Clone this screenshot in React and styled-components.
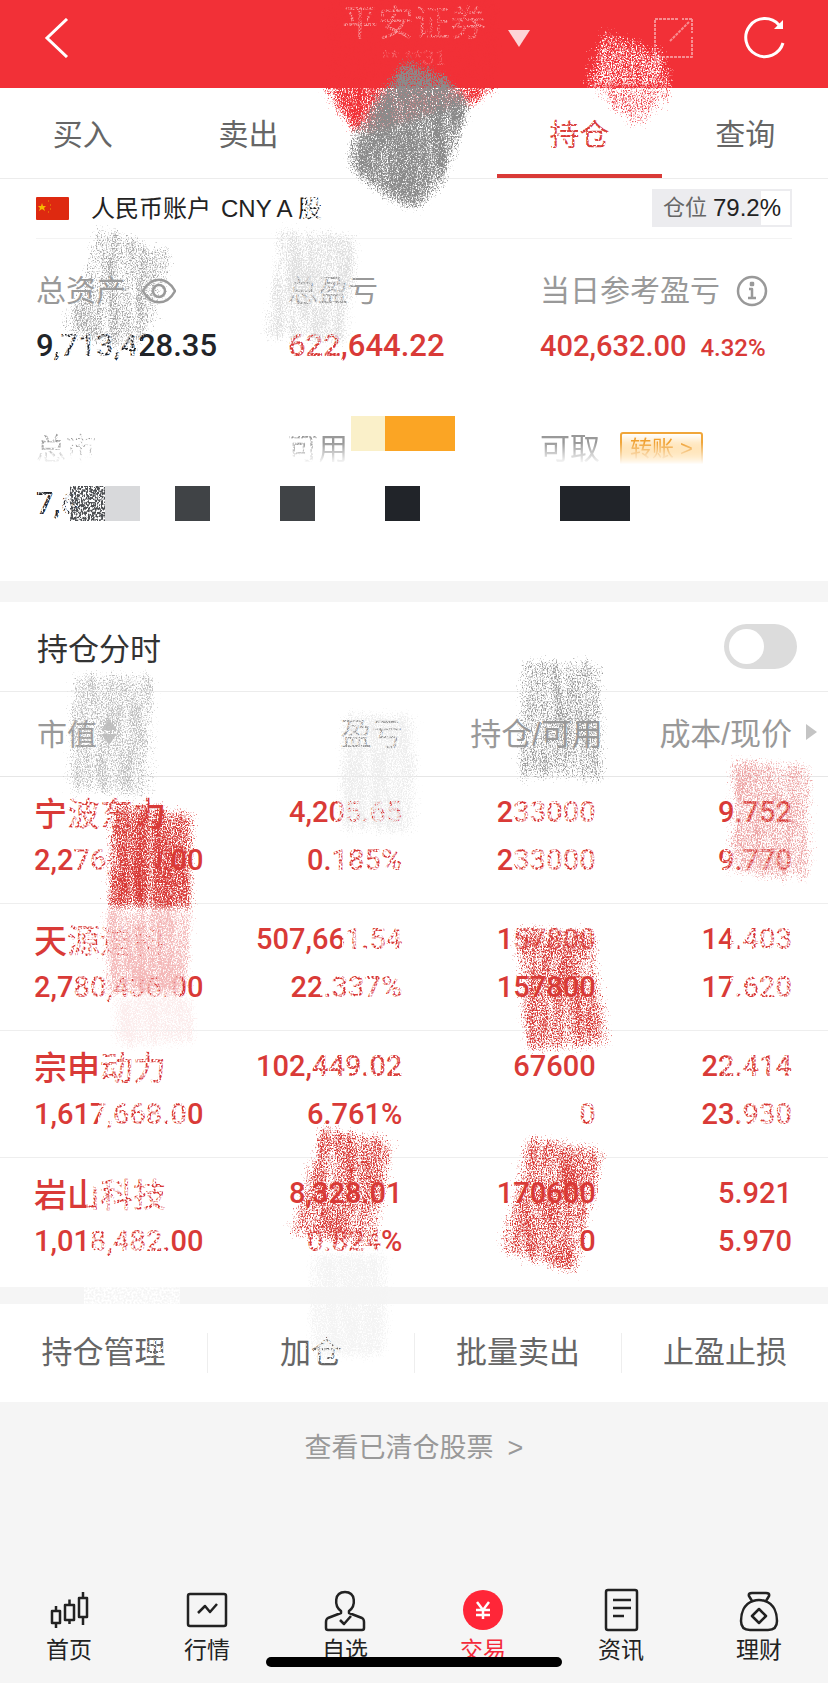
import React from 'react';
import styled, { createGlobalStyle } from 'styled-components';

const Global = createGlobalStyle`
  * { box-sizing: border-box; }
  body {
    margin: 0;
    background: #f5f5f5;
    font-family: "Liberation Sans", "Noto Sans CJK SC", sans-serif;
    color: #333;
  }
  button { border: 0; padding: 0; background: none; font: inherit; color: inherit; cursor: pointer; }
  a { color: inherit; text-decoration: none; }
  svg { display: block; }
`;

const Page = styled.div`
  position: relative;
  overflow: hidden;
`;

const Header = styled.header`
  display: grid;
  grid-template-columns: 1fr auto 1fr;
  align-items: center;
  height: 88px;
  padding: 0 42px 12px;
  background: #f23037;
  color: #fff;
`;
const Broker = styled.button`
  display: flex;
  align-items: center;
  gap: 20px;
  height: 76px;
  padding-left: 42px;
`;
const BrokerText = styled.span`
  display: flex;
  flex-direction: column;
  width: 148px;
  font-size: 36px;
  line-height: 40px;
  opacity: 0.5;
`;
const BrokerNumber = styled.span`
  font-size: 22px;
  line-height: 28px;
  text-align: center;
  opacity: 0.6;
`;
const HeaderTools = styled.div`
  display: flex;
  justify-content: flex-end;
  gap: 49px;
`;

const Tabs = styled.nav`
  display: grid;
  grid-template-columns: repeat(5, 1fr);
  height: 91px;
  background: #fff;
  border-bottom: 1px solid #ececec;
`;
const Tab = styled.a`
  display: flex;
  align-items: center;
  justify-content: center;
  padding-top: 2px;
  font-size: 30px;
  border-bottom: 4px solid ${(p) => (p.$active ? '#d93a37' : 'transparent')};
  color: ${(p) => (p.$active ? '#d93a37' : '#666')};
`;

const Summary = styled.section`
  background: #fff;
  padding: 0 36px 56px;
`;
const Account = styled.div`
  display: flex;
  align-items: center;
  gap: 22px;
  height: 60px;
  border-bottom: 1px solid #f3f3f3;
`;
const AccountName = styled.span`
  display: flex;
  gap: 10px;
  flex: 1;
  font-size: 24px;
  line-height: 36px;
  color: #222;
`;
const Position = styled.span`
  display: flex;
  align-items: center;
  justify-content: center;
  gap: 6px;
  width: 140px;
  height: 38px;
  margin-bottom: 2px;
  border: 2px solid #ececef;
  background: linear-gradient(90deg, #ececef 79%, #fff 79%);
  font-size: 24px;
  line-height: 32px;
  color: #222;
`;
const PositionLabel = styled.span`
  font-size: 22px;
  color: #666;
`;
const Figures = styled.dl`
  display: grid;
  grid-template-columns: repeat(3, 1fr);
  row-gap: 60px;
  margin: 0;
  padding-top: 30px;
`;
const FigureLabel = styled.dt`
  display: flex;
  align-items: center;
  gap: 16px;
  height: 44px;
  margin-bottom: 10px;
  font-size: 30px;
  line-height: 44px;
  white-space: nowrap;
  color: #999;
  ${(p) => p.$faded && 'mask-image: linear-gradient(#000 35%, transparent 85%);'}
`;
const FigureValue = styled.dd`
  display: flex;
  align-items: baseline;
  gap: 14px;
  height: 44px;
  margin: 0;
  font-family: Roboto, sans-serif;
  font-weight: 500;
  font-size: ${(p) => (p.$compact ? 29 : 31)}px;
  line-height: 46px;
  white-space: nowrap;
  color: ${(p) => (p.$up ? '#d93a37' : '#212429')};
`;
const Percent = styled.span`
  font-size: 24px;
`;
const Transfer = styled.button`
  height: 34px;
  margin-left: 4px;
  padding: 0 8px;
  border: 2px solid #f0a63a;
  border-radius: 3px;
  background: linear-gradient(#fff, #ffb840);
  font-size: 22px;
  line-height: 30px;
  color: #f0a030;
`;

const Holdings = styled.section`
  margin-top: 21px;
  background: #fff;
`;
const ChartToggle = styled.label`
  display: flex;
  align-items: center;
  justify-content: space-between;
  height: 90px;
  padding: 0 31px 0 37px;
  border-bottom: 1px solid #ececec;
  font-size: 31px;
  color: #333;
`;
const Switch = styled.input`
  appearance: none;
  width: 73px;
  height: 45px;
  margin: 0;
  padding: 5px;
  border-radius: 23px;
  background: #dcdcdc;
  &::before {
    content: '';
    display: block;
    width: 35px;
    height: 35px;
    border-radius: 50%;
    background: #fff;
  }
  &:checked { background: #d93a37; }
  &:checked::before { margin-left: auto; }
`;
const Table = styled.table`
  width: 100%;
  table-layout: fixed;
  border-collapse: collapse;
`;
const HeadCell = styled.th`
  height: 84px;
  width: ${(p) => p.$width};
  padding: 0 ${(p) => (p.$edge ? 11 : 0)}px 4px ${(p) => (p.$first ? 37 : 0)}px;
  border-bottom: 1px solid #e6e6e6;
  font-size: ${(p) => (p.$first ? 30 : 31)}px;
  font-weight: 400;
  color: #999;
`;
const HeadLabel = styled.span`
  display: flex;
  align-items: center;
  justify-content: ${(p) => (p.$first ? 'flex-start' : 'flex-end')};
  gap: ${(p) => (p.$first ? 4 : 14)}px;
  white-space: nowrap;
`;
const Cell = styled.td`
  padding: 11px ${(p) => p.$right || 0}px 19px ${(p) => (p.$first ? 34 : 0)}px;
  border-bottom: 1px solid #eee;
  text-align: ${(p) => (p.$first ? 'left' : 'right')};
  white-space: nowrap;
  color: #d93a37;
  tr:last-child & { border-bottom: 0; padding-bottom: 22px; }
`;
const Line = styled.span`
  display: block;
  height: 48px;
  font-family: Roboto, "Noto Sans CJK SC", sans-serif;
  font-weight: 500;
  font-size: ${(p) => (p.$name ? 33 : 29)}px;
  line-height: ${(p) => (p.$name ? 54 : 48)}px;
`;

const Actions = styled.section`
  display: grid;
  grid-template-columns: repeat(4, 1fr);
  align-items: center;
  height: 98px;
  margin-top: 17px;
  background: #fff;
`;
const Action = styled.button`
  height: 40px;
  font-size: 31px;
  line-height: 40px;
  color: #666;
  & + & { border-left: 1px solid #eee; }
`;
const Closed = styled.div`
  display: flex;
  justify-content: center;
  height: 173px;
  padding-top: 26px;
`;
const ClosedLink = styled.a`
  display: flex;
  gap: 14px;
  font-size: 27px;
  line-height: 40px;
  height: 40px;
  color: #999;
`;
const BottomNav = styled.nav`
  position: relative;
  display: grid;
  grid-template-columns: repeat(6, 1fr);
  height: 108px;
  padding-top: 12px;
`;
const NavItem = styled.a`
  display: flex;
  flex-direction: column;
  align-items: center;
  font-size: 23px;
  line-height: 34px;
  color: ${(p) => (p.$active ? '#f32b3a' : '#222')};
`;
const HomeBar = styled.span`
  position: absolute;
  left: 50%;
  bottom: 16px;
  width: 296px;
  height: 10px;
  border-radius: 5px;
  background: #000;
  transform: translateX(-50%);
`;
const Overlay = styled.svg`
  position: absolute;
  top: 0;
  left: 0;
  pointer-events: none;
`;

const Icon = ({ size = 46, stroke = 2, ...rest }) => (
  <svg width={size} height={size} viewBox={`0 0 ${size} ${size}`} fill="none" stroke="currentColor" strokeWidth={stroke} strokeLinejoin="round" aria-hidden="true" {...rest} />
);

const navItems = [
  { label: '首页', icon: <Icon stroke={2.5}><path d="M6 24h8v12H6zM10 19v5M10 36v5M19 18h9v15h-9zM23.500 12.500V18M23.500 33v4M33 11h8v19h-8zM37 5v6M37 30v8" /></Icon> },
  { label: '行情', icon: <Icon stroke={2.5}><rect x="4" y="7" width="38" height="32" rx="2" /><path d="m14 26 7-7 5 6 7-8" /></Icon> },
  { label: '自选', icon: <Icon stroke={2.5}><path d="M19 24c-7-5-7-19 4-19s11 14 4 19v2l13 5q2 1 2 4v6q0 2-2 2H6q-2 0-2-2v-6q0-3 2-4l13-5zM18 33l4 4 7-8" /></Icon> },
  { label: '交易', active: true, icon: <Icon><circle cx="23" cy="23" r="20" fill="#ff2638" stroke="none" /><path d="m17 15 6 8 6-8M16 23h14M16 28h14M23 23v9" stroke="#fff" strokeWidth="2.500" strokeLinejoin="miter" /></Icon> },
  { label: '资讯', icon: <Icon stroke={2.5}><rect x="8" y="3" width="31" height="40" rx="2" /><path d="M15 13h18M15 21h18M15 29h11" /></Icon> },
  { label: '理财', icon: <Icon stroke={2.5}><path d="m16 14-3-5q-1-3 3-3h14q4 0 3 3l-3 5M17 14C8 17 5 26 5 34q0 9 9 9h18q9 0 9-9c0-8-3-17-12-20q-6-2-12 0zM23 22l7 7-7 7-7-7z" /></Icon> },
];

const rows = [
  ['宁波东力', '2,276,410.00', '4,205.65', '0.185%', '233000', '233000', '9.752', '9.770'],
  ['天源迪科', '2,780,436.00', '507,661.54', '22.337%', '157800', '157800', '14.403', '17.620'],
  ['宗申动力', '1,617,668.00', '102,449.02', '6.761%', '67600', '0', '22.414', '23.930'],
  ['岩山科技', '1,018,482.00', '8,328.01', '0.824%', '170600', '0', '5.921', '5.970'],
];

/* Crayon strokes: polygon, colour, coverage. */
const strokes = [
  ['314,76 512,76 484,105 440,122 362,146 332,114', '#f23037', 0.68],
  ['406,52 444,70 476,96 468,127 444,192 414,216 380,200 344,168 348,136 370,96', '#8a8a8a', 0.68],
  ['602,22 674,50 682,98 576,98 586,53', '#ffffff', 0.55],
  ['584,80 682,80 670,106 638,138 602,108', '#f0434a', 0.54],
  ['92,218 178,246 162,329 126,358 52,334 76,280', '#a4a4a4', 0.53],
  ['274,222 364,228 354,350 258,345', '#dfdfdf', 0.58],
  ['68,668 160,668 158,804 62,796', '#bcbcbc', 0.55],
  ['517,652 609,658 609,788 511,782', '#999999', 0.54],
  ['336,708 422,708 420,840 334,836', '#ececec', 0.6],
  ['727,752 816,760 816,888 721,878', '#eda4a4', 0.57],
  ['106,796 198,808 196,918 102,916', '#d93a37', 0.64],
  ['100,902 197,902 193,1004 98,1000', '#f3b8b8', 0.62],
  ['108,988 198,988 200,1050 110,1052', '#fbebeb', 0.62],
  ['507,922 598,926 616,1050 523,1058', '#d93a37', 0.58],
  ['317,1120 400,1136 380,1254 282,1240', '#d93a37', 0.58],
  ['523,1130 609,1144 582,1280 494,1256', '#d93a37', 0.59],
  ['306,1248 394,1248 390,1362 306,1362', '#f5f5f5', 0.65],
];

/* Rubbed-out patches: x, y, width, height, coverage. */
const rubs = [
  [55, 328, 85, 36, 0.53], [288, 328, 55, 34, 0.47], [290, 270, 54, 40, 0.42],
  [551, 110, 62, 46, 0.44], [303, 192, 26, 32, 0.54], [36, 430, 34, 44, 0.5],
  [70, 430, 30, 44, 0.6],
  [290, 430, 30, 44, 0.5], [38, 484, 22, 40, 0.46], [60, 484, 20, 40, 0.6],
  [338, 716, 66, 42, 0.4], [68, 790, 80, 44, 0.53], [72, 840, 36, 40, 0.53],
  [108, 840, 50, 40, 0.75],
  [334, 792, 74, 42, 0.52], [334, 840, 74, 40, 0.52], [514, 792, 86, 88, 0.53], [722, 840, 74, 40, 0.46],
  [68, 918, 36, 44, 0.54], [104, 918, 68, 44, 0.6], [72, 966, 108, 40, 0.53], [342, 920, 64, 40, 0.54], [320, 968, 84, 40, 0.52],
  [514, 920, 86, 38, 0.5], [730, 920, 66, 88, 0.53],
  [102, 1046, 68, 42, 0.52], [98, 1094, 90, 40, 0.54], [314, 1048, 88, 38, 0.46],
  [578, 1096, 22, 38, 0.52], [722, 1048, 74, 38, 0.49], [738, 1096, 58, 38, 0.53],
  [86, 1172, 84, 44, 0.54], [88, 1222, 78, 40, 0.54], [306, 1222, 74, 40, 0.52],
  [146, 1340, 18, 18, 0.44], [318, 1338, 22, 24, 0.44], [84, 1286, 96, 20, 0.52],
];

const mosaic = [
  [351, 416, 34, 35, '#faf0c9'], [385, 416, 70, 35, '#fba524'],
  [105, 486, 35, 35, '#d8d9db'], [175, 486, 35, 35, '#404346'], [280, 486, 35, 35, '#404346'],
  [385, 486, 35, 35, '#212429'], [560, 486, 70, 35, '#212429'],
];

const Scribbles = () => (
  <Overlay width="828" height="1683" viewBox="0 0 828 1683" aria-hidden="true">
    <defs>
      <filter id="crayon" x="-20%" y="-20%" width="140%" height="140%" colorInterpolationFilters="sRGB">
        <feTurbulence type="fractalNoise" baseFrequency="0.8 0.6" numOctaves="3" seed="4" result="grain" />
        <feTurbulence type="fractalNoise" baseFrequency="0.11 0.02" numOctaves="3" seed="9" result="streak" />
        <feComposite in="grain" in2="streak" operator="arithmetic" k2="0.8" k3="0.25" k4="-0.03" result="noise" />
        <feGaussianBlur in="SourceAlpha" stdDeviation="8" result="soft" />
        <feComposite in="noise" in2="soft" operator="arithmetic" k2="1" k3="1" k4="-0.8" result="sum" />
        <feColorMatrix in="sum" type="matrix" values="0 0 0 0 0  0 0 0 0 0  0 0 0 0 0  0 0 0 5 -0.9" result="cover" />
        <feMorphology in="SourceGraphic" operator="dilate" radius="10" result="wide" />
        <feColorMatrix in="wide" type="matrix" values="1 0 0 0 0  0 1 0 0 0  0 0 1 0 0  0 0 0 8 0" result="paint" />
        <feComposite in="paint" in2="cover" operator="in" />
      </filter>
      <filter id="rub" x="0%" y="0%" width="100%" height="100%" colorInterpolationFilters="sRGB">
        <feTurbulence type="fractalNoise" baseFrequency="0.5" numOctaves="2" seed="3" result="grain" />
        <feComposite in="grain" in2="SourceAlpha" operator="arithmetic" k2="1" k3="1" k4="-0.8" result="sum" />
        <feColorMatrix in="sum" type="matrix" values="0 0 0 0 1  0 0 0 0 1  0 0 0 0 1  0 0 0 5 -0.6" />
      </filter>
      <filter id="rub-dark" x="0%" y="0%" width="100%" height="100%" colorInterpolationFilters="sRGB">
        <feTurbulence type="fractalNoise" baseFrequency="0.6 0.4" numOctaves="2" seed="7" />
        <feColorMatrix type="matrix" values="0 0 0 0 0.3  0 0 0 0 0.31  0 0 0 0 0.32  0 0 0 6 -2.4" />
      </filter>
    </defs>
    <rect x="324" y="-10" width="178" height="94" fill="#f23037" fillOpacity="0.62" filter="url(#crayon)" />
    {rubs.map(([x, y, w, h, o]) => (
      <rect key={`${x}-${y}`} x={x} y={y} width={w} height={h} fill="#fff" fillOpacity={o} filter="url(#rub)" />
    ))}
    {strokes.map(([points, color, o]) => (
      <polygon key={points} points={points} fill={color} fillOpacity={o} filter="url(#crayon)" />
    ))}
    {mosaic.map(([x, y, w, h, c]) => (
      <rect key={`${x}-${y}`} x={x} y={y} width={w} height={h} fill={c} />
    ))}
    <rect x="70" y="486" width="35" height="35" filter="url(#rub-dark)" />
  </Overlay>
);

export default function App() {
  return (
    <Page>
      <Global />
      <Header>
        <button aria-label="返回"><svg width="28" height="40" fill="none" stroke="currentColor" strokeWidth="3"><path d="M25 1 5 20l20 19" /></svg></button>
        <Broker>
          <BrokerText>平安证券<BrokerNumber>** **31</BrokerNumber></BrokerText>
          <svg width="22" height="18" fill="#fff" fillOpacity="0.800"><path d="M0 1h22L11 18z" /></svg>
        </Broker>
        <HeaderTools>
          <button aria-label="编辑"><Icon size={42} opacity="0.450"><path d="M25 2H2v38h37V20M39 2v14M39 2H29M17 24 36 5" strokeDasharray="3 1" /></Icon></button>
          <button aria-label="刷新"><Icon size={42} stroke={3}><path d="M39 26A19 19 0 1 1 35 8" /><path d="M39 3v9h-9z" fill="currentColor" stroke="none" /></Icon></button>
        </HeaderTools>
      </Header>
      <Tabs>
        <Tab href="#buy">买入</Tab>
        <Tab href="#sell">卖出</Tab>
        <Tab href="#cancel" aria-label="撤单" />
        <Tab href="#holdings" $active>持仓</Tab>
        <Tab href="#query">查询</Tab>
      </Tabs>

      <Summary>
        <Account>
          <svg width="33" height="23"><rect width="33" height="23" rx="1" fill="#de2910" /><path d="m6 6 1 3h3L8 11l1 3-3-2-3 2 1-3-2-2h3z" fill="#f5b800" /><path d="M12 4h1M14 8h1M14 12h1M12 15h1" stroke="#e9a000" /></svg>
          <AccountName><span>人民币账户</span><span>CNY A 股</span></AccountName>
          <Position><PositionLabel>仓位</PositionLabel>79.2%</Position>
        </Account>
        <Figures>
          <div>
            <FigureLabel>总资产<Icon size={34} stroke={2.5}><path d="M1 17C9 2 25 2 33 17 25 32 9 32 1 17z" /><circle cx="17" cy="17" r="6" /></Icon></FigureLabel>
            <FigureValue>9,713,428.35</FigureValue>
          </div>
          <div>
            <FigureLabel>总盈亏</FigureLabel>
            <FigureValue $up>622,644.22</FigureValue>
          </div>
          <div>
            <FigureLabel>当日参考盈亏<Icon size={32} stroke={2.5}><circle cx="16" cy="16" r="14" /><path d="M13 14h3v9M12 23h8M15 8h2v2h-2z" /></Icon></FigureLabel>
            <FigureValue $up $compact>402,632.00<Percent>4.32%</Percent></FigureValue>
          </div>
          <div>
            <FigureLabel $faded>总市</FigureLabel>
            <FigureValue>7,6</FigureValue>
          </div>
          <div>
            <FigureLabel $faded>可用</FigureLabel>
          </div>
          <div>
            <FigureLabel $faded>可取<Transfer>转账 &gt;</Transfer></FigureLabel>
          </div>
        </Figures>
      </Summary>

      <Holdings>
        <ChartToggle>持仓分时<Switch type="checkbox" role="switch" /></ChartToggle>
        <Table>
          <thead>
            <tr>
              <HeadCell $first $width="26%"><HeadLabel $first>市值<svg width="16" height="26" fill="#c4c4c4"><path d="m8 0 8 11H0zM8 26l8-11H0z" /></svg></HeadLabel></HeadCell>
              <HeadCell $width="22.6%"><HeadLabel>盈亏</HeadLabel></HeadCell>
              <HeadCell $width="24.2%"><HeadLabel>持仓/可用</HeadLabel></HeadCell>
              <HeadCell $edge $width="27.2%"><HeadLabel>成本/现价<svg width="11" height="16" fill="#c4c4c4"><path d="M0 0v16l11-8z" /></svg></HeadLabel></HeadCell>
            </tr>
          </thead>
          <tbody>
            {rows.map((r) => (
              <tr key={r[0]}>
                <Cell $first><Line $name>{r[0]}</Line><Line>{r[1]}</Line></Cell>
                <Cell><Line>{r[2]}</Line><Line>{r[3]}</Line></Cell>
                <Cell $right={7}><Line>{r[4]}</Line><Line>{r[5]}</Line></Cell>
                <Cell $right={36}><Line>{r[6]}</Line><Line>{r[7]}</Line></Cell>
              </tr>
            ))}
          </tbody>
        </Table>
      </Holdings>

      <Actions>
        <Action>持仓管理</Action>
        <Action>加仓</Action>
        <Action>批量卖出</Action>
        <Action>止盈止损</Action>
      </Actions>
      <Closed><ClosedLink href="#closed">查看已清仓股票<span>&gt;</span></ClosedLink></Closed>

      <BottomNav>
        {navItems.map((n) => (
          <NavItem key={n.label} href={`#${n.label}`} $active={n.active}>{n.icon}{n.label}</NavItem>
        ))}
        <HomeBar />
      </BottomNav>
      <Scribbles />
    </Page>
  );
}
